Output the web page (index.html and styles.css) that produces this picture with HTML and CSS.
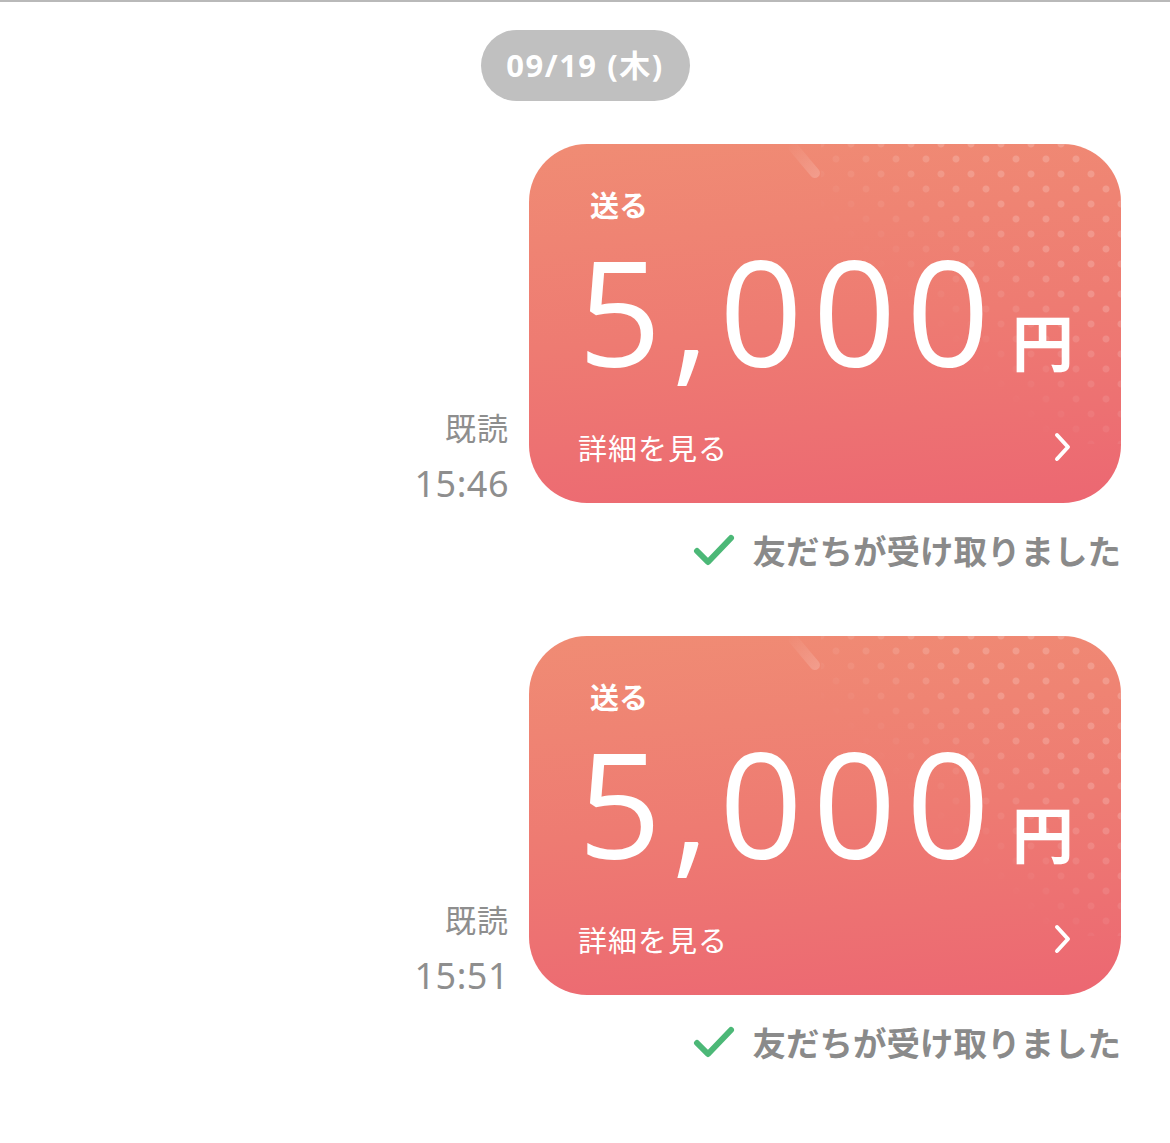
FILE: index.html
```html
<!DOCTYPE html>
<html lang="ja">
<head>
    <meta charset="UTF-8">
    <meta name="viewport" content="width=device-width, initial-scale=1.0">
    <title>トーク</title>
    <link rel="stylesheet" href="styles.css">
</head>
<body>

    <div class="chat">
        <div class="date-row">
            <span class="date-pill">09/19 (木)</span>
        </div>

        <div class="msg">
            <div class="meta">
                <div class="read">既読</div>
                <div class="time">15:46</div>
            </div>
            <div class="card">
                <div class="card-label">送る</div>
                <div class="amount"><span class="num">5,000</span><span class="yen">円</span></div>
                <div class="card-foot">
                    <span>詳細を見る</span>
                    <svg class="chevron" width="20" height="32" viewBox="0 0 20 32"><path d="M4 4 L15 16 L4 28" fill="none" stroke="#fff" stroke-width="4" stroke-linecap="round" stroke-linejoin="round"/></svg>
                </div>
            </div>
        </div>
        <div class="receipt">
            <svg class="check" width="42" height="32" viewBox="0 0 42 32"><path d="M4 17 L15 28 L38 4" fill="none" stroke="#4cb877" stroke-width="6" stroke-linecap="round" stroke-linejoin="round"/></svg>
            <span>友だちが受け取りました</span>
        </div>

        <div class="msg">
            <div class="meta">
                <div class="read">既読</div>
                <div class="time">15:51</div>
            </div>
            <div class="card">
                <div class="card-label">送る</div>
                <div class="amount"><span class="num">5,000</span><span class="yen">円</span></div>
                <div class="card-foot">
                    <span>詳細を見る</span>
                    <svg class="chevron" width="20" height="32" viewBox="0 0 20 32"><path d="M4 4 L15 16 L4 28" fill="none" stroke="#fff" stroke-width="4" stroke-linecap="round" stroke-linejoin="round"/></svg>
                </div>
            </div>
        </div>
        <div class="receipt">
            <svg class="check" width="42" height="32" viewBox="0 0 42 32"><path d="M4 17 L15 28 L38 4" fill="none" stroke="#4cb877" stroke-width="6" stroke-linecap="round" stroke-linejoin="round"/></svg>
            <span>友だちが受け取りました</span>
        </div>
    </div>

</body>
</html>
```

FILE: styles.css
```css
body {
    margin: 0;
    background: #fff;
    font-family: "Noto Sans CJK JP", "Noto Sans", sans-serif;
}

.chat {
    border-top: 2px solid #b9b9b9;
    padding: 0 49px 40px 0;
}

.date-row {
    display: flex;
    justify-content: center;
    padding-top: 28px;
    padding-left: 49px;
}

.date-pill {
    background-color: #c0c0c0;
    color: #fff;
    font-family: "Noto Sans", "Noto Sans CJK JP", sans-serif;
    font-weight: 700;
    font-size: 31px;
    letter-spacing: 1.5px;
    height: 71px;
    line-height: 71px;
    border-radius: 36px;
    width: 209px;
    text-align: center;
}

.msg {
    display: flex;
    justify-content: flex-end;
    align-items: flex-end;
    gap: 20px;
    margin-top: 43px;
}

.receipt + .msg {
    margin-top: 66px;
}

.meta {
    text-align: right;
    color: #8e8e8e;
    margin-bottom: -1px;
}

.read {
    font-size: 31px;
    line-height: 40px;
    letter-spacing: 1px;
}

.time {
    font-family: "Noto Sans", sans-serif;
    font-size: 36px;
    line-height: 40px;
    letter-spacing: 0.5px;
    margin-top: 17px;
}

.card {
    position: relative;
    width: 592px;
    height: 359px;
    border-radius: 58px;
    overflow: hidden;
    color: #fff;
    background: linear-gradient(175deg, #f08c74 0%, #ee7b72 50%, #ec6772 100%);
    box-sizing: border-box;
    padding: 38px 50px 0 49px;
}

.card::before {
    content: "";
    position: absolute;
    top: 0;
    right: 0;
    width: 300px;
    height: 300px;
    background-image:
        radial-gradient(circle, rgba(255,255,255,0.18) 3px, transparent 4px),
        radial-gradient(circle, rgba(255,255,255,0.18) 3px, transparent 4px);
    background-size: 30px 30px;
    background-position: 0 0, 15px 15px;
    -webkit-mask-image: linear-gradient(225deg, #000 30%, transparent 62%);
    mask-image: linear-gradient(225deg, #000 30%, transparent 62%);
}

.card::after {
    content: "";
    position: absolute;
    top: -6px;
    left: 270px;
    width: 10px;
    height: 44px;
    background: linear-gradient(rgba(255,255,255,0.0), rgba(255,255,255,0.18));
    transform: rotate(-40deg);
    border-radius: 5px;
}

.card-label {
    position: relative;
    font-weight: 700;
    font-size: 29px;
    line-height: 44px;
    margin-left: 12px;
}

.amount {
    position: relative;
    display: flex;
    align-items: baseline;
    margin-top: 10px;
    height: 150px;
}

.num {
    font-family: "Open Sans", sans-serif;
    font-weight: 400;
    font-size: 146px;
    line-height: 150px;
    letter-spacing: 10px;
}

.yen {
    font-weight: 700;
    font-size: 62px;
    margin-left: 12px;
}

.card-foot {
    position: relative;
    display: flex;
    justify-content: space-between;
    align-items: center;
    margin-top: 41px;
    font-size: 29px;
    line-height: 40px;
    letter-spacing: 1px;
}

.chevron {
    margin-right: -2px;
}

.receipt {
    display: flex;
    justify-content: flex-end;
    align-items: center;
    gap: 18px;
    margin-top: 27px;
    color: #8a8a8a;
    font-weight: 700;
    font-size: 33.5px;
    line-height: 40px;
}
```
